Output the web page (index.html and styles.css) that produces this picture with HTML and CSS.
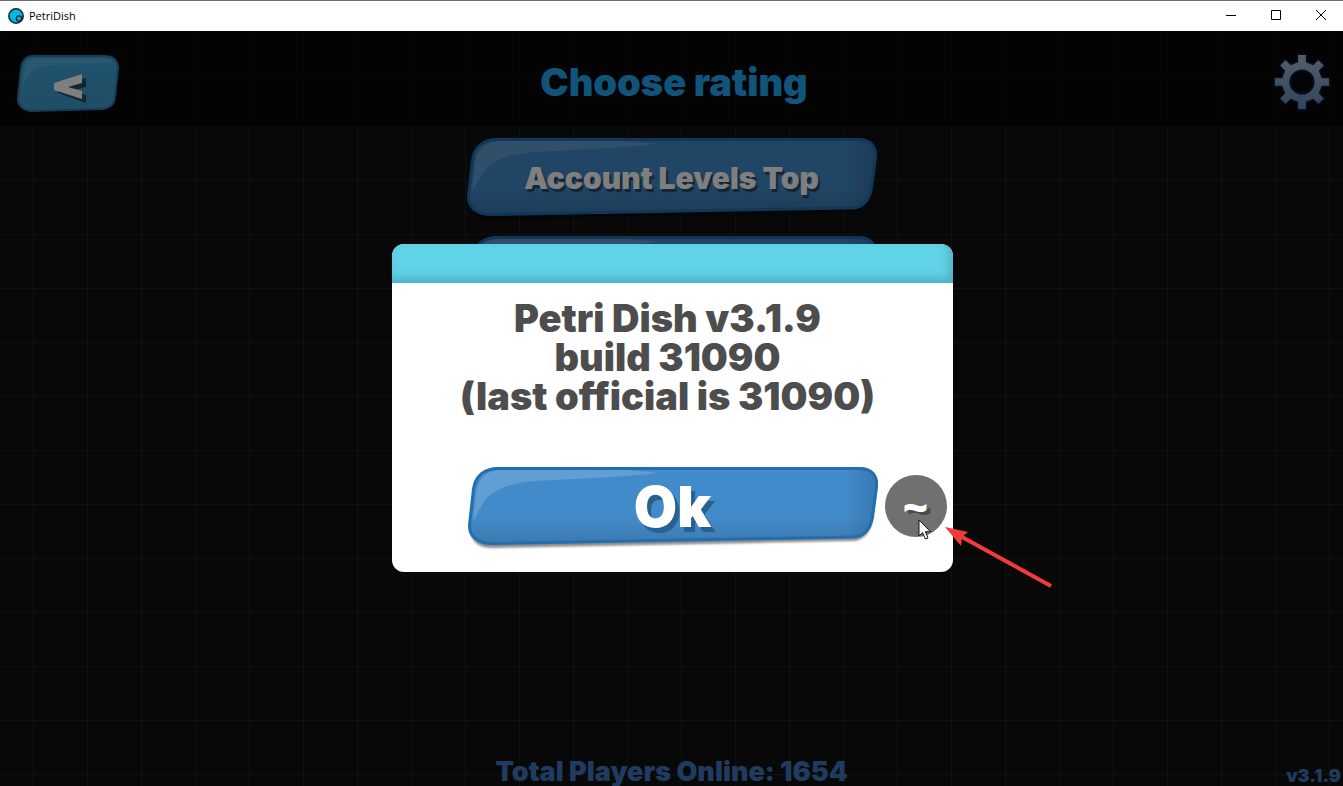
FILE: index.html
```html
<!DOCTYPE html>
<html lang="en">
<head>
<meta charset="utf-8">
<title>PetriDish</title>
<link rel="stylesheet" href="styles.css">
</head>
<body>
<svg class="defs" aria-hidden="true">
  <defs>
    <linearGradient id="shade" x1="0" y1="0" x2="0" y2="1">
      <stop offset="0" stop-color="#428bca"/><stop offset=".65" stop-color="#428bca"/><stop offset="1" stop-color="#3c79ae"/>
    </linearGradient>
    <linearGradient id="side" x1="0" y1="0" x2="1" y2="0">
      <stop offset=".92" stop-color="#1f4f7c" stop-opacity="0"/><stop offset="1" stop-color="#1f4f7c" stop-opacity=".3"/>
    </linearGradient>
    <linearGradient id="backFill" x1="0" y1="0" x2="0" y2="1">
      <stop offset="0" stop-color="#42a6dc"/><stop offset="1" stop-color="#3f9bcb"/>
    </linearGradient>
    <linearGradient id="steel" x1="0" y1="0" x2="0" y2="1">
      <stop offset="0" stop-color="#a9bdd4"/><stop offset="1" stop-color="#6088b4"/>
    </linearGradient>
    <filter id="soft" x="-5%" y="-10%" width="110%" height="130%"><feGaussianBlur stdDeviation="1.2"/></filter>
  </defs>
  <symbol id="plate" viewBox="0 0 410 84">
    <path d="M30 1H392C404 1 410 9 408 20L404 50C402 62 396 70 384 70L24 77C9 77 2 69 3 58L6 22C8 9 16 1 30 1Z" fill="#000" opacity=".45" filter="url(#soft)" transform="translate(0 4)"/>
    <path d="M30 1H392C404 1 410 9 409 20L405 50C403 62 396 70 384 70L24 77C9 77 0 69 1 58L5 22C7 9 16 1 30 1Z" fill="url(#shade)"/>
    <path d="M30 1.500H392C404 1.500 410 9 408.500 20L404.500 50C402.500 62 396 70 384 70L24 76.500C9 76.500 1 69 1.500 58L5.500 22C7.500 9 16 1.500 30 1.500Z" fill="url(#side)" stroke="#226eb0" stroke-width="3"/>
    <path d="M5 54L8 26C10 11 18 4 32 3H155Q178 4 189 6Q165 9 125 11L68 14Q25 17 14 38Z" fill="#fff" opacity=".17"/>
  </symbol>
</svg>

<header class="titlebar">
  <svg class="app-icon" viewBox="0 0 16 16" aria-hidden="true">
    <circle cx="8" cy="8" r="7.2" fill="#0bb5d8" stroke="#082442" stroke-width="1.5"/>
    <circle cx="11" cy="10.5" r="2.6" fill="#0bb5d8" stroke="#082442" stroke-width="1.3"/>
  </svg>
  <span class="app-name">PetriDish</span>
  <button class="win" aria-label="Minimize"><svg viewBox="0 0 12 12"><path d="M1 5.5H11"/></svg></button>
  <button class="win" aria-label="Maximize"><svg viewBox="0 0 12 12"><path d="M1.500.500H10.500V9.500H1.500Z"/></svg></button>
  <button class="win" aria-label="Close"><svg viewBox="0 0 12 12"><path d="M1 0L11 10M11 0L1 10"/></svg></button>
</header>

<div class="game">
  <div class="topbar">
    <button class="back" aria-label="Back">
      <svg viewBox="0 0 102 58" aria-hidden="true">
        <path d="M16 1H88C97 1 101 6 101 14L98 42C97 50 92 54 84 54L14 56C5 55 0 50 1 42L4 14C5 6 9 1 16 1Z" fill="url(#backFill)" stroke="#2a7cab" stroke-width="2"/>
        <path d="M5 32L7 15C9 7 12 4 18 4H84Q95 4 96 6Q91 8 74 9L36 10Q17 12 13 18Z" fill="#fff" opacity=".13"/>
        <path d="M69 23V32L53 36 69 40V48L41 38V32Z" fill="#244f68"/>
        <path d="M65 19V28L51 32 65 36V44L37 35V28Z" fill="#fff"/>
      </svg>
    </button>
    <h1 class="heading">Choose rating</h1>
    <button class="settings" aria-label="Settings">
      <svg viewBox="-30 -30 60 60" aria-hidden="true">
        <g fill="none" stroke="#08183a">
          <circle r="16.5" stroke-width="12"/>
          <path stroke-width="11" stroke-linejoin="round" d="M0-30V-18M0 30V18M-30 0H-18M30 0H18M-21-21L-12-12M21 21L12 12M21-21L12-12M-21 21L-12 12"/>
        </g>
        <path fill="url(#steel)" fill-rule="evenodd" d="M-4-28H4V-20.400L11.600-17.300 17-22.500 22.500-17 17.300-11.600 20.400-4H28V4H20.400L17.300 11.600 22.500 17 17 22.500 11.600 17.300 4 20.400V28H-4V20.400L-11.600 17.300-17 22.500-22.500 17-17.300 11.600-20.400 4H-28V-4H-20.400L-17.300-11.600-22.500-17-17-22.500-11.600-17.300-4-20.400ZM13 0A13 13 0 1 0-13 0A13 13 0 1 0 13 0Z"/>
      </svg>
    </button>
  </div>

  <main class="ratings">
    <button class="plate"><svg aria-hidden="true"><use href="#plate"/></svg><span>Account Levels Top</span></button>
    <div class="plate"><svg aria-hidden="true"><use href="#plate"/></svg></div>
  </main>

  <footer class="status">
    <span class="online">Total Players Online: 1654</span>
    <span class="version">v3.1.9</span>
  </footer>

  <div class="shade">
    <section class="dialog" role="dialog" aria-modal="true" aria-labelledby="message">
      <div class="dialog-cap"></div>
      <p class="message" id="message">Petri Dish v3.1.9<br>build 31090<br>(last official is 31090)</p>
      <div class="actions">
        <button class="plate ok"><svg aria-hidden="true"><use href="#plate"/></svg><span>Ok</span></button>
        <button class="tilde">~</button>
      </div>
      <svg class="cursor" viewBox="0 0 14 21" aria-hidden="true"><path d="M1 1V17L4.600 13.600 7.400 20 10 18.900 7.300 12.700H12.500Z" fill="#fff" stroke="#101020" stroke-width="1"/></svg>
      <svg class="arrow" viewBox="0 0 110 62" aria-hidden="true"><path d="M18 10L107 59" stroke="#f43b3b" stroke-width="4"/><path d="M1 0L24 5 18 10 17 19Z" fill="#f43b3b"/></svg>
    </section>
  </div>
</div>
</body>
</html>
```

FILE: styles.css
```css
* { box-sizing: border-box; }

body {
  margin: 0;
  height: 100vh;
  display: flex;
  flex-direction: column;
  overflow: hidden;
  font-family: Inter, "Open Sans", sans-serif;
  font-weight: 900;
}

button {
  padding: 0;
  border: 0;
  background: none;
  font: inherit;
  color: inherit;
}

svg { display: block; }
.defs { position: absolute; width: 0; height: 0; }

.titlebar {
  height: 31px;
  flex: none;
  display: flex;
  align-items: center;
  padding-left: 8px;
  padding-bottom: 1px;
  border-top: 1px solid #6e6e6e;
  background: #fff;
  color: #000;
}
.app-icon { width: 16px; height: 16px; margin-right: 5px; }
.app-name { flex: 1; font: 400 11px "Open Sans", sans-serif; }
.win { width: 45px; height: 29px; display: grid; place-items: center; }
.win svg { width: 12px; height: 12px; fill: none; stroke: #000; stroke-width: 1; }

.game {
  position: relative;
  flex: 1;
  min-height: 0;
  display: flex;
  flex-direction: column;
  background-color: #101010;
  background-image:
    linear-gradient(#222 1px, transparent 1px),
    linear-gradient(90deg, #222 1px, transparent 1px);
  background-size: 54px 54px;
  background-position: 33px 41px;
}

.topbar {
  height: 96px;
  flex: none;
  display: grid;
  grid-template-columns: 1fr auto 1fr;
  align-items: center;
  padding: 6px 12px 0 17px;
  background: rgba(0, 0, 0, .6);
}
.back { width: 102px; height: 58px; margin-top: 4px; }
.heading { margin: 0; font-size: 38px; line-height: 48px; font-weight: 900; color: #22a8f4; }
.settings { justify-self: end; }
.settings svg { width: 58px; height: 58px; }

.ratings {
  flex: 1;
  min-height: 0;
  display: flex;
  flex-direction: column;
  align-items: center;
  gap: 20px;
  padding-top: 11px;
  overflow: hidden;
}

.plate {
  display: grid;
  width: 410px;
  height: 78px;
  flex: none;
  place-items: center;
  align-content: start;
  font-size: 30px;
  color: #fff;
  text-shadow: 2px 3px 1px #244a6e;
}
.plate > * { grid-area: 1 / 1; }
.plate svg { width: 410px; height: 84px; margin-bottom: -4px; align-self: start; }

.status {
  display: grid;
  grid-template-columns: 1fr auto 1fr;
  align-items: end;
  height: 30px;
  color: #3e78c0;
}
.online { grid-column: 2; font-size: 27px; line-height: 28px; }
.version { justify-self: end; padding-right: 2px; font-size: 18px; line-height: 20px; }

.shade {
  position: absolute;
  inset: 0;
  display: grid;
  place-items: center;
  padding: 0 0 2px 2px;
  background: rgba(0, 0, 0, .5);
}

.dialog {
  position: relative;
  width: 561px;
  border-radius: 12px;
  background: #fff;
  color: #4d4d4d;
}
.dialog-cap {
  height: 39px;
  border-radius: 12px 12px 0 0;
  background: #62d4e8;
  box-shadow: inset -4px -5px 10px rgba(40, 110, 130, .35);
}
.message {
  margin: 0;
  padding: 16px 10px 0 0;
  font-size: 38px;
  line-height: 39px;
  text-align: center;
}
.actions {
  display: grid;
  grid-template-columns: 1fr auto 1fr;
  align-items: center;
  column-gap: 7px;
  padding: 51px 0 27px;
}
.ok { grid-column: 2; font-size: 56px; line-height: 68px; text-shadow: 4px 5px 0 #29608f; }
.tilde {
  width: 62px;
  height: 62px;
  border-radius: 50%;
  background: #707070;
  color: #fff;
  font: 800 44px/62px "Open Sans", sans-serif;
  text-shadow: 4px 3px 0 #4a4a4a;
}
.cursor { position: absolute; left: 526px; top: 275px; width: 14px; height: 21px; }
.arrow { position: absolute; left: 552px; top: 283px; width: 110px; height: 62px; }
```
